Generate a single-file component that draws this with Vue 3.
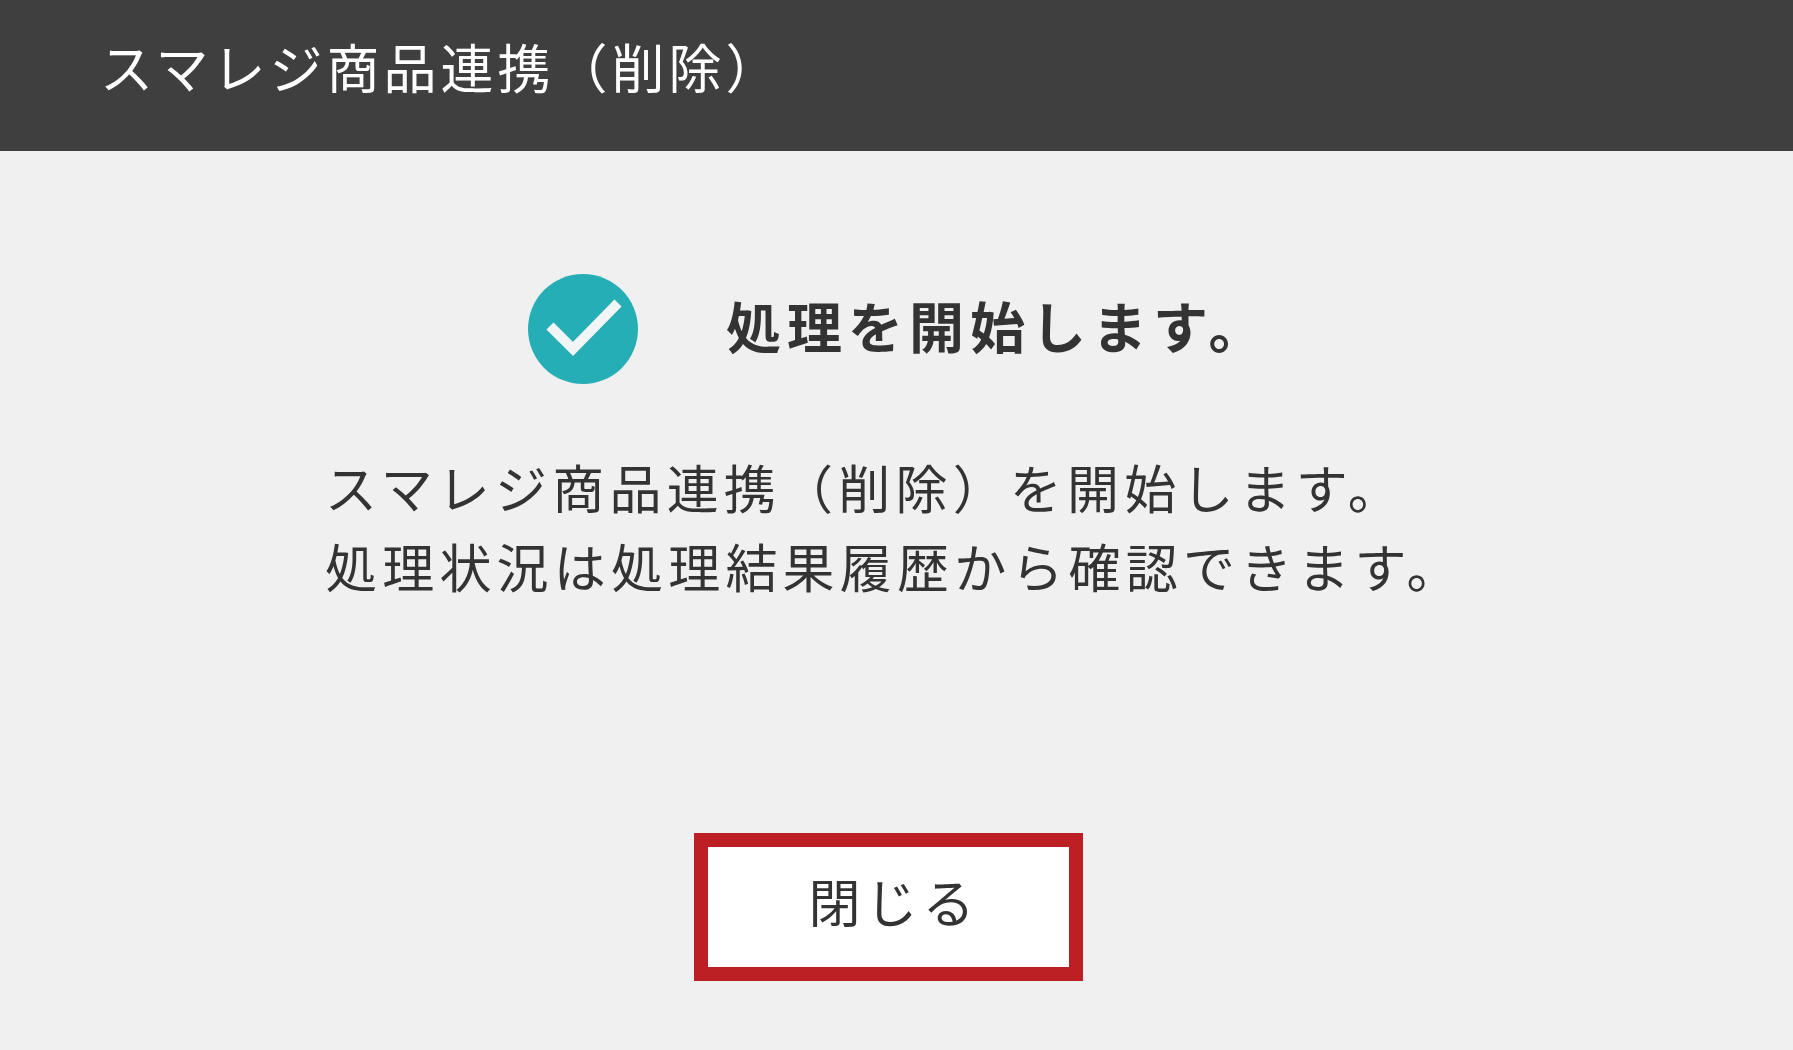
<script setup>
const title = 'スマレジ商品連携（削除）'
const heading = '処理を開始します。'
const messages = [
  'スマレジ商品連携（削除）を開始します。',
  '処理状況は処理結果履歴から確認できます。'
]
</script>

<template>
  <div class="dialog">
    <header class="dialog-header">
      <h1>{{ title }}</h1>
    </header>
    <main class="dialog-body">
      <div class="status">
        <svg class="status-icon" viewBox="0 0 110 110" aria-hidden="true">
          <circle cx="55" cy="55" r="55" fill="#25aeb5" />
          <path d="M22 52 L45 75 L90 29" fill="none" stroke="#f2f5f5" stroke-width="10" />
        </svg>
        <h2>{{ heading }}</h2>
      </div>
      <div class="message">
        <p v-for="line in messages" :key="line">{{ line }}</p>
      </div>
      <button class="close-btn" type="button">閉じる</button>
    </main>
  </div>
</template>

<style scoped>
.dialog {
  height: 1050px;
  display: flex;
  flex-direction: column;
  background: #f0f0f0;
  font-family: "Noto Sans CJK JP", "Noto Sans", sans-serif;
  color: #333;
}

.dialog-header {
  height: 151px;
  box-sizing: border-box;
  padding: 38px 0 0 100px;
  background: #3f3f3f;
}

.dialog-header h1 {
  margin: 0;
  font-size: 53px;
  line-height: 56px;
  font-weight: 400;
  letter-spacing: 4px;
  color: #fff;
}

.dialog-body {
  flex: 1;
  display: flex;
  flex-direction: column;
  align-items: flex-start;
}

.status {
  display: flex;
  align-items: center;
  gap: 88px;
  margin: 123px 0 0 528px;
}

.status-icon {
  width: 110px;
  height: 110px;
  flex-shrink: 0;
}

.status h2 {
  margin: 0 0 11px;
  font-size: 55px;
  line-height: 60px;
  font-weight: 700;
  letter-spacing: 6px;
}

.message {
  margin: 63px 0 0 325px;
}

.message p {
  margin: 0;
  font-size: 52px;
  line-height: 79px;
  font-weight: 400;
  letter-spacing: 5.2px;
}

.close-btn {
  align-self: flex-start;
  width: 389px;
  height: 148px;
  margin: 228px 0 0 694px;
  padding: 0 0 14px 11px;
  box-sizing: border-box;
  border: 14px solid #bc1f24;
  background: #fff;
  font: inherit;
  font-size: 52px;
  letter-spacing: 5px;
  color: #333;
}
</style>
